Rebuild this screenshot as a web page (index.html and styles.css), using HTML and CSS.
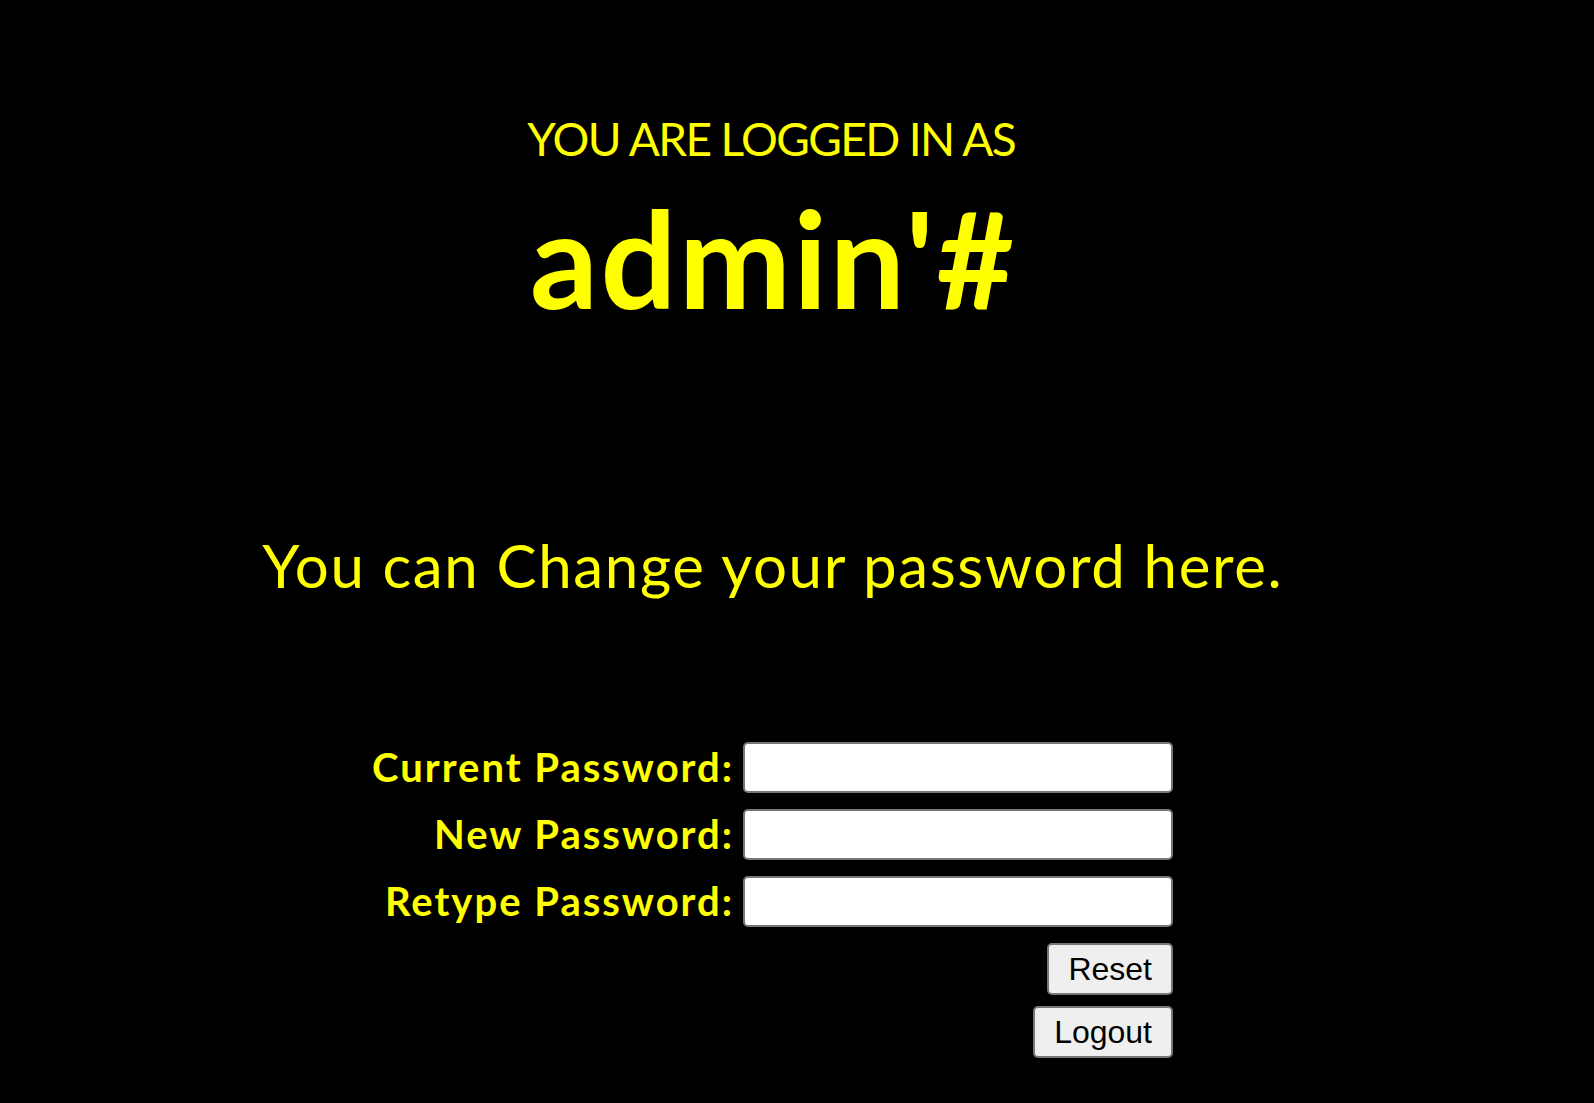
FILE: index.html
```html
<!DOCTYPE html>
<html lang="en">
<head>
<meta charset="utf-8">
<title>Change password</title>
<link rel="stylesheet" href="styles.css">
</head>
<body>
<main class="page">
  <p class="eyebrow">YOU ARE LOGGED IN AS</p>
  <h1 class="user">admin'#</h1>
  <p class="subtitle">You can Change your password here.</p>
  <form class="pw-form">
    <label class="pw-label" for="cur">Current Password:</label>
    <input class="pw-input" id="cur" type="password">
    <label class="pw-label" for="new">New Password:</label>
    <input class="pw-input" id="new" type="password">
    <label class="pw-label" for="re">Retype Password:</label>
    <input class="pw-input" id="re" type="password">
    <div class="actions">
      <button class="btn" type="reset">Reset</button>
      <button class="btn" type="button">Logout</button>
    </div>
  </form>
</main>
</body>
</html>
```
FILE: styles.css
```css
html, body {
  margin: 0;
  background: #000;
}
body {
  font-family: Lato, "Open Sans", sans-serif;
  color: #ffff00;
}
.page {
  width: 1544px;
  display: flex;
  flex-direction: column;
  align-items: center;
  padding-top: 111px;
}
.eyebrow {
  margin: 0;
  font-size: 46px;
  line-height: 56px;
  font-weight: 400;
  letter-spacing: -1.6px;
  text-indent: -1.6px;
}
.user {
  margin: 21px 0 0;
  font-size: 134px;
  line-height: 140px;
  font-weight: 700;
  letter-spacing: 2.3px;
  text-indent: 2.3px;
}
.subtitle {
  margin: 202px 0 0;
  font-size: 60px;
  line-height: 70px;
  font-weight: 400;
  letter-spacing: 1.65px;
  text-indent: 1.65px;
}
.pw-form {
  margin-top: 142px;
  display: grid;
  grid-template-columns: 361px 430px;
  column-gap: 11px;
  row-gap: 16px;
}
.pw-label {
  font-size: 40px;
  line-height: 51px;
  font-weight: 700;
  text-align: right;
  white-space: nowrap;
  letter-spacing: 2px;
  margin-right: -2px;
}
.pw-input {
  box-sizing: border-box;
  width: 430px;
  height: 51px;
  border: 2px solid #767676;
  border-radius: 5px;
  background: #fff;
  margin: 0;
  padding: 0 4px;
}
.actions {
  grid-column: 2;
  display: flex;
  flex-direction: column;
  align-items: flex-end;
  gap: 11px;
}
.btn {
  box-sizing: border-box;
  height: 52px;
  padding: 0 19px;
  margin: 0;
  font-family: "Liberation Sans", Arial, sans-serif;
  font-size: 32px;
  color: #000;
  background: #efefef;
  border: 2px solid #767676;
  border-radius: 5px;
}
```
